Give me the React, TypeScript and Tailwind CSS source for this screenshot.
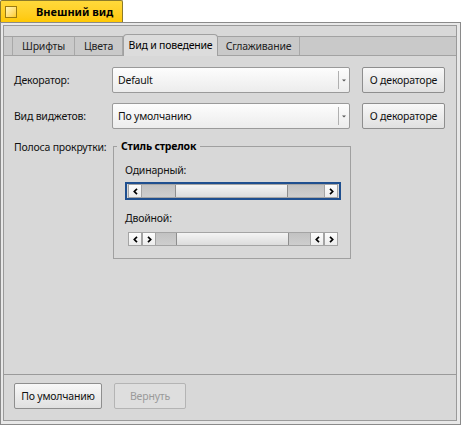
import { ReactNode } from 'react'

const font = "font-['Noto_Sans',sans-serif]"

function Button({ children, disabled, className = '' }: { children: ReactNode; disabled?: boolean; className?: string }) {
  return (
    <div
      className={`flex h-[26px] items-center justify-center rounded-[2px] border ${
        disabled
          ? 'border-[#b4b4b4] bg-[#dedede] text-[#9a9a9a]'
          : 'border-[#8e8e8e] bg-gradient-to-b from-[#f8f8f8] to-[#e0e0e0] text-[#111]'
      } ${className}`}
    >
      {children}
    </div>
  )
}

function Select({ value }: { value: string }) {
  return (
    <div className="flex h-[26px] items-stretch rounded-[2px] border border-[#9a9a9a] bg-gradient-to-b from-[#fdfdfd] to-[#ececec]">
      <div className="flex flex-1 items-center pl-[5px] text-[#111]">{value}</div>
      <div className="my-[3px] w-px bg-[#b0b0b0]" />
      <div className="flex w-[10px] items-center justify-center">
        <svg width="4" height="3" viewBox="0 0 4 3">
          <path d="M0 0.5 H4 L2 2.5 Z" fill="#555" />
        </svg>
      </div>
    </div>
  )
}

function ArrowBtn({ dir }: { dir: 'l' | 'r' }) {
  return (
    <div className="flex h-full w-[14px] shrink-0 items-center justify-center border-x border-[#a4a4a4] bg-gradient-to-b from-[#fdfdfd] to-[#ececec]">
      <svg width="5" height="7" viewBox="0 0 5 7">
        <path
          d={dir === 'l' ? 'M4 0.8 L1.3 3.5 L4 6.2' : 'M1 0.8 L3.7 3.5 L1 6.2'}
          stroke="#000"
          strokeWidth="1.7"
          fill="none"
        />
      </svg>
    </div>
  )
}

function ScrollBar({ double }: { double?: boolean }) {
  return (
    <div className="flex h-[14px] w-[210px] border-y border-[#a4a4a4] bg-[#c9c9c9]">
      <ArrowBtn dir="l" />
      {double && <ArrowBtn dir="r" />}
      <div className={`${double ? 'w-[20px]' : 'w-[33px]'} shrink-0 bg-gradient-to-b from-[#c2c2c2] to-[#cecece]`} />
      <div className="w-[113px] shrink-0 border-x border-[#8e8e8e] bg-gradient-to-b from-[#f4f4f4] to-[#dcdcdc]" />
      <div className="flex-1 bg-gradient-to-b from-[#c2c2c2] to-[#cecece]" />
      {double && <ArrowBtn dir="l" />}
      <ArrowBtn dir="r" />
    </div>
  )
}

const tabs = ['Шрифты', 'Цвета', 'Вид и поведение', 'Сглаживание']
const tabW = ['w-[62px]', 'w-[48px]', 'w-[95px]', 'w-[82px]']

export default function App() {
  return (
    <div className={`h-[425px] w-[461px] bg-white text-[10.5px] leading-[14px] tracking-[-0.2px] ${font}`}>
      {/* title tab */}
      <div className="flex h-[22px] w-[123px] items-center gap-[19px] rounded-t-[2px] border border-b-0 border-[#8c7a2a] bg-gradient-to-b from-[#ffd93a] to-[#ffc800] pl-[4px]">
        <div className="h-[12px] w-[12px] border border-[#9a7a10] bg-gradient-to-br from-[#fff6b8] to-[#ffcc10]" />
        <span className="text-[11px] font-bold tracking-normal text-black">Внешний вид</span>
      </div>

      {/* window */}
      <div className="h-[403px] border border-[#8a8a8a] bg-[#e8e8e8] pb-[3px] pl-[2px] pr-[3px] pt-[2px]">
        <div className="flex h-full flex-col border border-[#9a9a9a] bg-[#d8d8d8]">
          <div className="h-[10px]" />

          {/* tab row */}
          <div className="flex h-[20px] border-y border-[#a2a2a2] bg-[#c9c9c9] text-[#222]">
            <div className="w-[9px] border-r border-[#a8a8a8]" />
            {tabs.map((t, i) =>
              i === 2 ? (
                <div
                  key={t}
                  className={`${tabW[i]} relative z-10 -mb-px -mt-[3px] flex items-center justify-center rounded-t-[4px] border border-b-0 border-[#a0a0a0] bg-[#dcdcdc] pb-[1px] text-black`}
                >
                  {t}
                </div>
              ) : (
                <div key={t} className={`${tabW[i]} flex items-center justify-center border-r border-[#a8a8a8]`}>
                  {t}
                </div>
              ),
            )}
            <div className="flex-1" />
          </div>

          {/* panel */}
          <div className="grid flex-1 grid-cols-[86px_238px_83px] content-start gap-x-[12px] gap-y-[10px] pl-[10px] pt-[11px] text-[#111]">
            <div className="flex items-center">Декоратор:</div>
            <Select value="Default" />
            <Button>О декораторе</Button>

            <div className="flex items-center">Вид виджетов:</div>
            <Select value="По умолчанию" />
            <Button>О декораторе</Button>

            <div className="whitespace-nowrap pt-[1px]">Полоса прокрутки:</div>
            <fieldset className="ml-[1px] h-[120px] border border-[#a0a0a0] pl-[11px] pr-[9px]">
              <legend className="-ml-[8px] px-[4px] font-bold text-black">Стиль стрелок</legend>
              <div className="mt-[10px]">Одинарный:</div>
              <div className="mt-[5px] w-fit border-2 border-[#1f4f8f] px-px">
                <ScrollBar />
              </div>
              <div className="mt-[11px]">Двойной:</div>
              <div className="mt-[5px] w-fit border-2 border-transparent px-px">
                <ScrollBar double />
              </div>
            </fieldset>
          </div>

          {/* bottom buttons */}
          <div className="flex h-[46px] gap-[12px] border-t border-[#9a9a9a] pl-[10px] pt-[8px]">
            <Button className="w-[88px]">По умолчанию</Button>
            <Button disabled className="w-[72px]">
              Вернуть
            </Button>
          </div>
        </div>
      </div>
    </div>
  )
}
